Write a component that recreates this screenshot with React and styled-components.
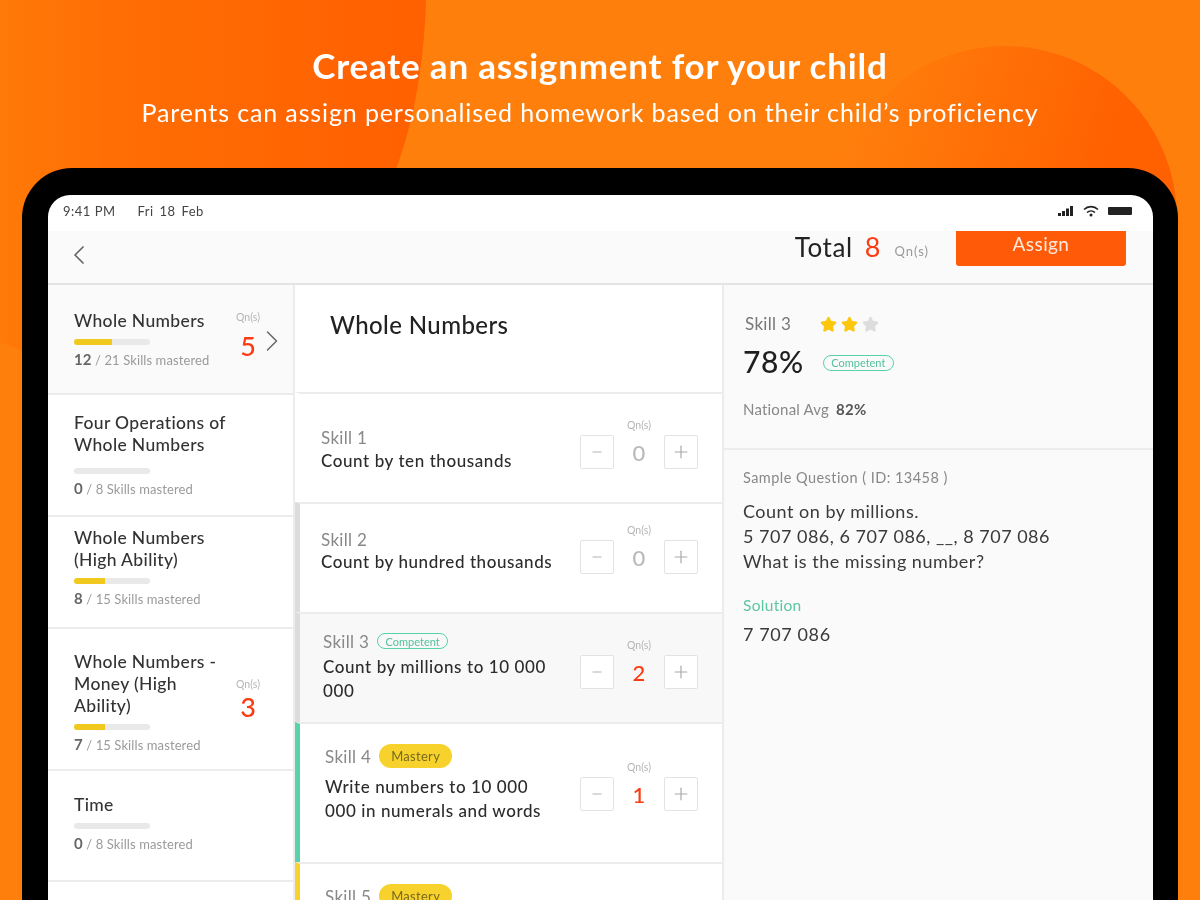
import styled, { createGlobalStyle } from "styled-components";
import { ChevronLeft, ChevronRight, Star, Plus, Minus } from "lucide-react";

const GlobalStyle = createGlobalStyle`
  html, body {
    margin: 0;
    padding: 0;
  }
  * {
    box-sizing: border-box;
  }
`;

const colors = {
  orange: "#ff7f0d",
  deep: "#ff6000",
  red: "#fb3c12",
  button: "#ff5a08",
  green: "#58d2a9",
  yellow: "#f8d22c",
  line: "#ececec",
  soft: "#fafafa",
  text: "#2b2b2b",
  muted: "#7d7d7d",
};

const Page = styled.div`
  width: 1200px;
  height: 900px;
  position: relative;
  overflow: hidden;
  background: ${colors.orange};
  font-family: Lato, "Open Sans", sans-serif;
  color: ${colors.text};
  filter: blur(0.45px);
`;

const Backdrop = styled.svg`
  position: absolute;
  inset: 0;
`;

const Hero = styled.header`
  position: relative;
  height: 168px;
  padding-top: 43px;
  text-align: center;
  color: #fff;
`;

const HeroTitle = styled.h1`
  margin: 0;
  font-size: 35px;
  line-height: 44px;
  font-weight: 700;
  letter-spacing: 0.8px;
`;

const HeroSub = styled.p`
  margin: 9px 20px 0 0;
  font-size: 25px;
  line-height: 32px;
  font-weight: 400;
  letter-spacing: 0.87px;
`;

const Tablet = styled.div`
  position: relative;
  margin-left: 22px;
  width: 1156px;
  height: 780px;
  padding: 27px 25px 0 26px;
  background: #000;
  border-radius: 50px 50px 0 0;
`;

const Screen = styled.div`
  height: 100%;
  display: flex;
  flex-direction: column;
  overflow: hidden;
  background: #fff;
  border-radius: 22px 22px 0 0;
`;

const StatusBar = styled.div`
  height: 36px;
  flex: none;
  display: flex;
  align-items: center;
  padding: 0 19px 4px 15px;
  font-size: 13px;
  letter-spacing: 0.5px;
  color: #444;
`;

const StatusDate = styled.span`
  margin-left: 22px;
  word-spacing: 2px;
`;

const StatusIcons = styled.svg`
  margin-left: auto;
`;

const TopBar = styled.div`
  height: 54px;
  flex: none;
  display: flex;
  align-items: flex-start;
  padding-right: 27px;
  background: ${colors.soft};
  border-bottom: 2px solid #e4e4e4;
`;

const BackButton = styled.div`
  display: flex;
  margin: 8px auto 0 15px;
  color: #666;
`;

const TotalLabel = styled.span`
  margin-top: 1px;
  font-size: 26px;
  line-height: 30px;
  letter-spacing: 0.6px;
  color: #222;
`;

const TotalCount = styled.span`
  margin: 1px 0 0 12px;
  font-size: 27px;
  line-height: 30px;
  color: ${colors.red};
`;

const QnsUnit = styled.span`
  margin: 12px 27px 0 14px;
  font-size: 13px;
  line-height: 16px;
  letter-spacing: 1px;
  color: #999;
`;

const AssignButton = styled.button`
  width: 170px;
  height: 35px;
  padding: 0 0 10px;
  border: none;
  border-radius: 0 0 3px 3px;
  background: ${colors.button};
  color: #ffe9dd;
  font-family: inherit;
  font-size: 19px;
  letter-spacing: 0.4px;
`;

const Columns = styled.div`
  flex: 1;
  min-height: 0;
  display: grid;
  grid-template-columns: 247px 429px 1fr;
`;

const TopicColumn = styled.div`
  border-right: 2px solid ${colors.line};
  overflow: hidden;
`;

const TopicRow = styled.div`
  height: ${(p) => p.$height}px;
  position: relative;
  padding: ${(p) => p.$top}px 0 0 26px;
  background: ${(p) => (p.$active ? colors.soft : "#fff")};
  border-bottom: 2px solid ${colors.line};
`;

const TopicName = styled.div`
  width: 152px;
  font-size: 17.5px;
  line-height: 22px;
  letter-spacing: 0.35px;
  color: #333;
  font-weight: 500;
`;

const Progress = styled.div`
  width: 76px;
  height: 6px;
  margin-top: ${(p) => p.$gap}px;
  border-radius: 3px;
  background: #e9e9e9;
  overflow: hidden;
`;

const ProgressFill = styled.div`
  height: 100%;
  background: #f1c81e;
`;

const MasteredLine = styled.div`
  margin-top: 5px;
  font-size: 13px;
  line-height: 18px;
  letter-spacing: 0.1px;
  color: #9a9a9a;

  b {
    font-size: 15px;
    font-weight: 700;
    color: #666;
  }
`;

const TopicCount = styled.div`
  position: absolute;
  left: 187px;
  top: ${(p) => p.$top}px;
  width: 26px;
  text-align: center;
`;

const TinyUnit = styled.div`
  font-size: 10.5px;
  line-height: 12px;
  color: #b5b5b5;
`;

const BigCount = styled.div`
  margin-top: ${(p) => p.$gap}px;
  font-size: 27px;
  line-height: 32px;
  font-weight: 500;
  color: ${colors.red};
`;

const TopicArrow = styled.div`
  position: absolute;
  left: 206px;
  top: 38px;
  display: flex;
  color: #666;
`;

const SkillColumn = styled.div`
  border-right: 2px solid ${colors.line};
  overflow: hidden;
`;

const SkillTitle = styled.div`
  height: 107px;
  padding: 24px 0 0 35px;
  font-size: 24px;
  line-height: 32px;
  letter-spacing: 0.4px;
  color: #222;
  font-weight: 500;
`;

const SkillRow = styled.div`
  height: ${(p) => p.$height}px;
  display: flex;
  justify-content: space-between;
  align-items: flex-start;
  padding: 0 24px 0 ${(p) => p.$left}px;
  background: ${(p) => (p.$active ? "#f8f8f8" : "#fff")};
  border-top: 2px solid ${colors.line};
  border-left: 5px solid ${(p) => p.$accent};
`;

const SkillInfo = styled.div`
  padding-top: ${(p) => p.$top}px;
`;

const SkillHeading = styled.div`
  display: flex;
  align-items: center;
  gap: 8px;
  height: 24px;
  font-size: 17px;
  letter-spacing: 0.3px;
  color: #888;
`;

const OutlineTag = styled.span`
  display: inline-flex;
  align-items: center;
  justify-content: center;
  width: 71px;
  height: 16px;
  margin-top: ${(p) => p.$shift || 0}px;
  border: 1px solid ${colors.green};
  border-radius: 8px;
  font-size: 11px;
  letter-spacing: 0;
  font-weight: 400;
  color: #55c09d;
`;

const MasteryTag = styled.span`
  display: inline-flex;
  align-items: center;
  justify-content: center;
  width: 73px;
  height: 24px;
  border-radius: 12px;
  background: ${colors.yellow};
  font-size: 13px;
  color: #77691f;
`;

const SkillText = styled.div`
  width: ${(p) => p.$width}px;
  margin-top: ${(p) => p.$gap}px;
  font-size: 17px;
  line-height: 24px;
  letter-spacing: 0.58px;
  font-weight: 500;
  color: #2c2c2c;
`;

const Stepper = styled.div`
  flex: none;
  display: grid;
  grid-template-columns: 34px 34px 34px;
  grid-template-rows: 12px 34px;
  column-gap: 8px;
  row-gap: 4px;
  margin-top: ${(p) => p.$top}px;
  justify-items: center;
  align-items: center;
`;

const StepUnit = styled(TinyUnit)`
  grid-column: 2;
`;

const StepButton = styled.div`
  width: 34px;
  height: 34px;
  display: flex;
  align-items: center;
  justify-content: center;
  grid-row: 2;
  background: #fff;
  border: 1px solid #e3e3e3;
  border-radius: 2px;
  color: #a8a8a8;
`;

const StepValue = styled.div`
  grid-row: 2;
  font-size: 22px;
  font-weight: 500;
  color: ${(p) => (p.$zero ? "#b9b9b9" : colors.red)};
`;

const DetailColumn = styled.div`
  background: ${colors.soft};
`;

const DetailTop = styled.div`
  height: 165px;
  padding: 26px 20px 0 19px;
  border-bottom: 2px solid ${colors.line};
`;

const DetailSkillLine = styled.div`
  display: flex;
  align-items: center;
  padding-left: 2px;
  font-size: 17px;
  line-height: 26px;
  color: #777;
  letter-spacing: 0.3px;
`;

const Stars = styled.div`
  display: flex;
  gap: 4px;
  margin-left: 29px;
`;

const ScoreLine = styled.div`
  display: flex;
  align-items: center;
  gap: 19px;
  margin-top: 6px;
  font-size: 30px;
  line-height: 36px;
  font-weight: 500;
  letter-spacing: 0.6px;
  color: #1f1f1f;
`;

const AvgLine = styled.div`
  margin-top: 21px;
  font-size: 15px;
  line-height: 18px;
  letter-spacing: 0.2px;
  color: #888;

  b {
    margin-left: 7px;
    font-weight: 700;
    color: #555;
  }
`;

const DetailBody = styled.div`
  padding: 18px 20px 0 19px;
`;

const SampleLabel = styled.div`
  font-size: 14.5px;
  line-height: 20px;
  letter-spacing: 0.45px;
  color: #888;
`;

const Question = styled.div`
  margin-top: 11px;
  font-size: 18px;
  line-height: 25px;
  letter-spacing: 0.5px;
  color: #3a3a3a;
`;

const SolutionLabel = styled.div`
  margin-top: 21px;
  font-size: 15.5px;
  line-height: 20px;
  color: #5cc6a2;
  letter-spacing: 0.3px;
`;

const SolutionValue = styled.div`
  margin-top: 7px;
  font-size: 18px;
  line-height: 24px;
  letter-spacing: 0.6px;
  color: #3a3a3a;
`;

const topics = [
  { name: "Whole Numbers", done: 12, total: 21, pct: 50, height: 110, top: 25, count: 5, countTop: 26, active: true, countGap: 7, barGap: 7 },
  { name: "Four Operations of Whole Numbers", done: 0, total: 8, pct: 0, height: 122, top: 17, barGap: 12 },
  { name: "Whole Numbers (High Ability)", done: 8, total: 15, pct: 41, height: 112, top: 10, barGap: 7 },
  { name: "Whole Numbers - Money (High Ability)", done: 7, total: 15, pct: 41, height: 142, top: 22, count: 3, countTop: 49, countGap: 1, barGap: 7 },
  { name: "Time", done: 0, total: 8, pct: 0, height: 111, top: 23, barGap: 7 },
];

const skills = [
  { id: 1, text: "Count by ten thousands", value: 0, height: 110, top: 31, left: 21, width: 230, accent: "#fff", stepTop: 25, gap: 0 },
  { id: 2, text: "Count by hundred thousands", value: 0, height: 110, top: 23, left: 21, width: 240, accent: "#dcdcdc", stepTop: 20, gap: -1 },
  { id: 3, text: "Count by millions to 10 000 000", value: 2, height: 110, top: 15, left: 23, width: 232, accent: "#dcdcdc", stepTop: 25, gap: 2, active: true, tag: "outline" },
  { id: 4, text: "Write numbers to 10 000 000 in numerals and words", value: 1, height: 140, top: 20, left: 25, width: 230, accent: colors.green, stepTop: 37, gap: 7, tag: "mastery" },
  { id: 5, text: "", value: 0, height: 60, top: 20, left: 25, width: 230, accent: colors.yellow, stepTop: 60, gap: 0, tag: "mastery" },
];

const StatusGlyphs = () => (
  <StatusIcons width="76" height="12" viewBox="0 0 76 12">
    <g fill="#222">
      <rect x="0" y="8" width="3" height="3" />
      <rect x="4" y="6" width="3" height="5" />
      <rect x="8" y="3.5" width="3" height="7.5" />
      <rect x="12" y="1" width="3" height="10" />
      <rect x="50" y="2" width="24" height="8" rx="1" />
    </g>
    <g fill="none" stroke="#222" strokeWidth="1.6">
      <path d="M26 4.500a10 10 0 0 1 14 0" />
      <path d="M29 7.500a6 6 0 0 1 8 0" />
    </g>
    <circle cx="33" cy="10" r="1.500" fill="#222" />
  </StatusIcons>
);

const Topic = ({ item }) => (
  <TopicRow $height={item.height} $top={item.top} $active={item.active}>
    <TopicName>{item.name}</TopicName>
    <Progress $gap={item.barGap}>
      <ProgressFill style={{ width: `${item.pct}%` }} />
    </Progress>
    <MasteredLine>
      <b>{item.done}</b> / {item.total} Skills mastered
    </MasteredLine>
    {item.count && (
      <TopicCount $top={item.countTop}>
        <TinyUnit>Qn(s)</TinyUnit>
        <BigCount $gap={item.countGap || 0}>{item.count}</BigCount>
      </TopicCount>
    )}
    {item.active && (
      <TopicArrow>
        <ChevronRight size={36} strokeWidth={1} />
      </TopicArrow>
    )}
  </TopicRow>
);

const Skill = ({ item }) => (
  <SkillRow
    $height={item.height}
    $left={item.left}
    $accent={item.accent}
    $active={item.active}
  >
    <SkillInfo $top={item.top}>
      <SkillHeading>
        Skill {item.id}
        {item.tag === "outline" && <OutlineTag>Competent</OutlineTag>}
        {item.tag === "mastery" && <MasteryTag>Mastery</MasteryTag>}
      </SkillHeading>
      <SkillText $width={item.width} $gap={item.gap}>
        {item.text}
      </SkillText>
    </SkillInfo>
    <Stepper $top={item.stepTop}>
      <StepUnit>Qn(s)</StepUnit>
      <StepButton>
        <Minus size={14} strokeWidth={1.5} />
      </StepButton>
      <StepValue $zero={item.value === 0}>{item.value}</StepValue>
      <StepButton>
        <Plus size={20} strokeWidth={1.4} />
      </StepButton>
    </Stepper>
  </SkillRow>
);

export default function App() {
  return (
    <Page>
      <GlobalStyle />
      <Backdrop width="1200" height="900" viewBox="0 0 1200 900">
        <defs>
          <linearGradient id="blobLeft" x1="0" y1="0" x2="1" y2="0">
            <stop offset="0" stopColor="#ff7a08" />
            <stop offset="0.25" stopColor="#ff6e04" />
            <stop offset="1" stopColor={colors.deep} />
          </linearGradient>
          <linearGradient id="blobRight" x1="0" y1="0" x2="1" y2="0.3">
            <stop offset="0.1" stopColor={colors.orange} />
            <stop offset="0.85" stopColor={colors.deep} />
          </linearGradient>
        </defs>
        <path
          d="M0 0H426C424 70 412 130 392 180L100 400L22 351C14 347 6 344 0 343Z"
          fill="url(#blobLeft)"
        />
        <circle cx="1005" cy="218" r="172" fill="url(#blobRight)" />
      </Backdrop>
      <Hero>
        <HeroTitle>Create an assignment for your child</HeroTitle>
        <HeroSub>
          Parents can assign personalised homework based on their child’s
          proficiency
        </HeroSub>
      </Hero>
      <Tablet>
        <Screen>
          <StatusBar>
            <span>9:41 PM</span>
            <StatusDate>Fri 18 Feb</StatusDate>
            <StatusGlyphs />
          </StatusBar>
          <TopBar>
            <BackButton>
              <ChevronLeft size={32} strokeWidth={1.3} />
            </BackButton>
            <TotalLabel>Total</TotalLabel>
            <TotalCount>8</TotalCount>
            <QnsUnit>Qn(s)</QnsUnit>
            <AssignButton>Assign</AssignButton>
          </TopBar>
          <Columns>
            <TopicColumn>
              {topics.map((item) => (
                <Topic key={item.name} item={item} />
              ))}
            </TopicColumn>
            <SkillColumn>
              <SkillTitle>Whole Numbers</SkillTitle>
              {skills.map((item) => (
                <Skill key={item.id} item={item} />
              ))}
            </SkillColumn>
            <DetailColumn>
              <DetailTop>
                <DetailSkillLine>
                  Skill 3
                  <Stars>
                    <Star size={17} fill="#fcc70d" color="#fcc70d" />
                    <Star size={17} fill="#fcc70d" color="#fcc70d" />
                    <Star size={17} fill="#dddddd" color="#dddddd" />
                  </Stars>
                </DetailSkillLine>
                <ScoreLine>
                  78%
                  <OutlineTag $shift={3}>Competent</OutlineTag>
                </ScoreLine>
                <AvgLine>
                  National Avg<b>82%</b>
                </AvgLine>
              </DetailTop>
              <DetailBody>
                <SampleLabel>Sample Question ( ID: 13458 )</SampleLabel>
                <Question>
                  Count on by millions.
                  <br />5 707 086, 6 707 086, __, 8 707 086
                  <br />
                  What is the missing number?
                </Question>
                <SolutionLabel>Solution</SolutionLabel>
                <SolutionValue>7 707 086</SolutionValue>
              </DetailBody>
            </DetailColumn>
          </Columns>
        </Screen>
      </Tablet>
    </Page>
  );
}
